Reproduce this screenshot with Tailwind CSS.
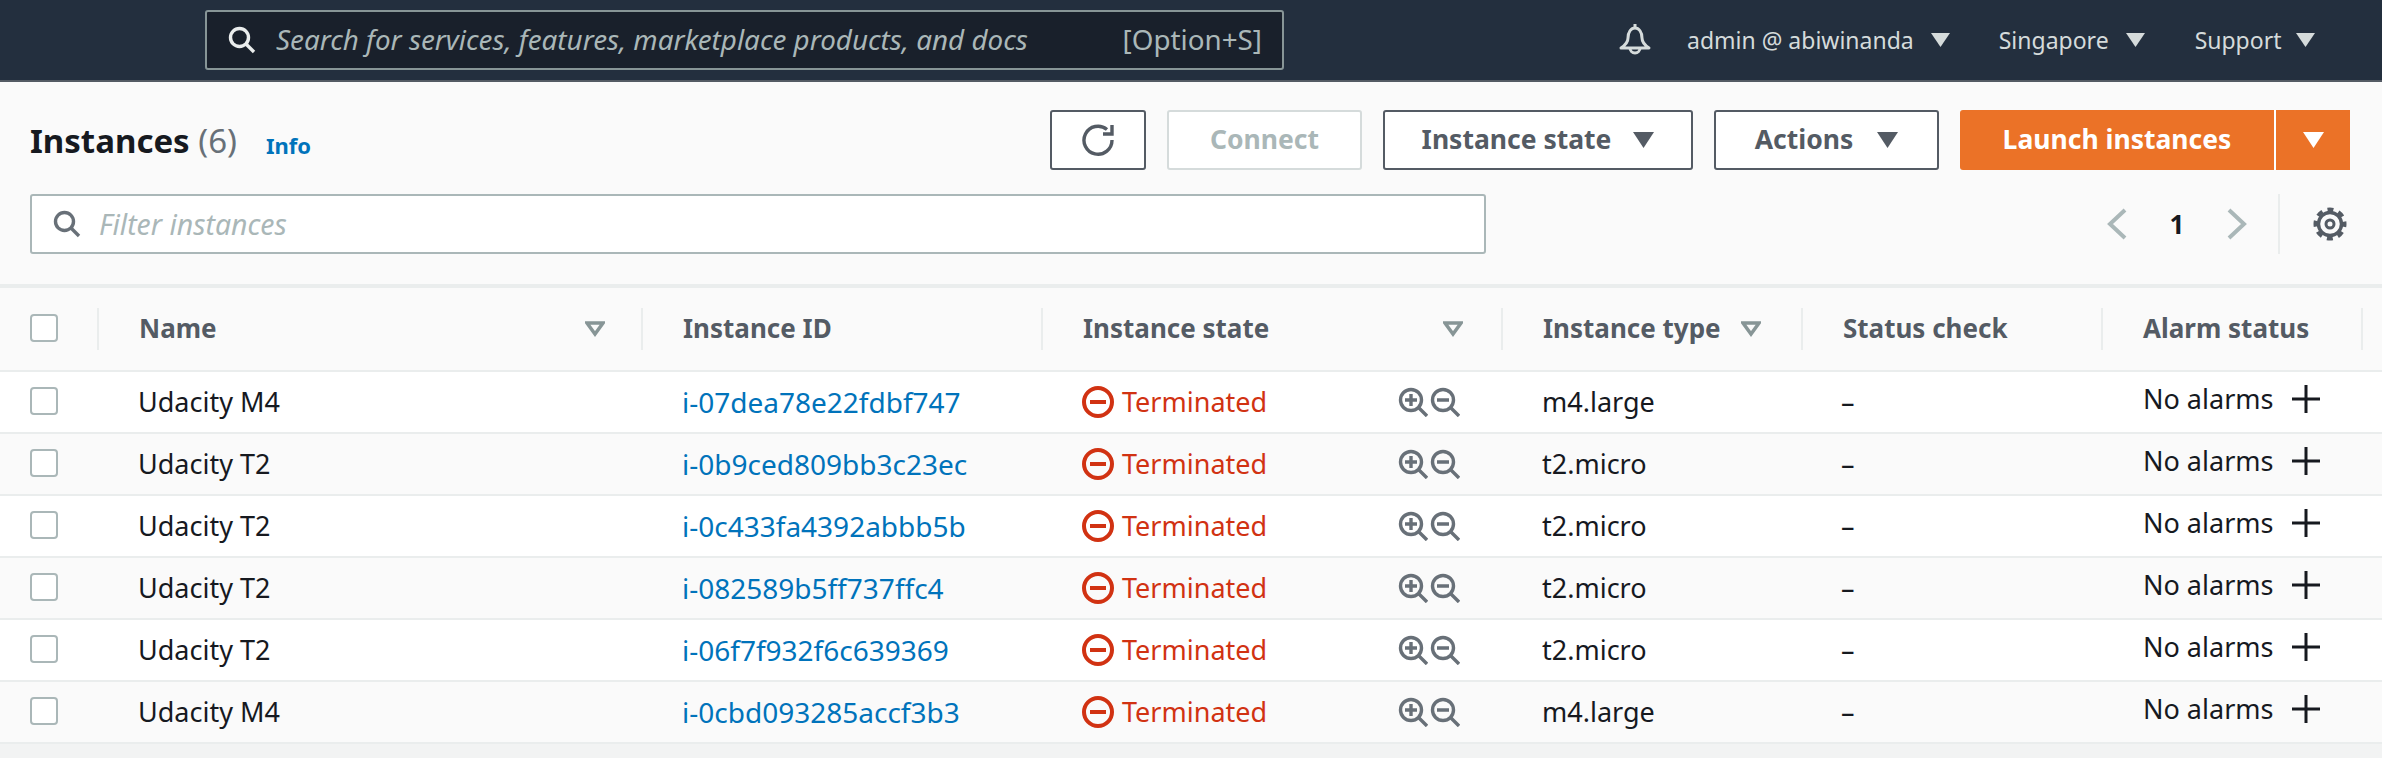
<!DOCTYPE html>
<html lang="en">
<head>
<meta charset="utf-8">
<title>Instances</title>
<script src="https://cdn.jsdelivr.net/npm/@tailwindcss/browser@4"></script>
</head>
<body class="bg-[#f2f3f3] font-['Noto_Sans',sans-serif] text-[#16191f] w-[2382px] h-[758px] overflow-hidden">

<header class="h-[82px] bg-[#232f3e] border-b-2 border-[#545b64] flex items-center pl-[205px]">
  <div class="w-[1079px] h-[60px] bg-[#19202b] border-2 border-[#879596] rounded-[3px] flex items-center pl-[20px] pr-[20px] text-[27.8px] text-[#aab7b8]">
    <svg class="w-[30px] h-[30px] text-[#eaeded]" viewBox="0 0 30 30" fill="none" stroke="currentColor" stroke-width="3.4"><circle cx="12.5" cy="12.5" r="9"/><path d="M19 19l8 8"/></svg>
    <span class="ml-[19px] italic">Search for services, features, marketplace products, and docs</span>
    <span class="ml-auto">[Option+S]</span>
  </div>
  <div class="ml-[334px] flex items-center text-[23px] text-[#d5dbdb]">
    <svg class="w-[34px] h-[34px]" viewBox="0 0 34 34" fill="none" stroke="currentColor" stroke-width="3" stroke-linejoin="round"><path d="M17 1v4M10 15c0-6 3-10 7-10s7 4 7 10c0 4 4 8 7 10H3c3-2 7-6 7-10z"/><path d="M12 25a5 5 0 0 0 10 0"/></svg>
    <span class="ml-[35px]">admin @ abiwinanda</span>
    <svg class="ml-[17px] w-[19px] h-[14px]" viewBox="0 0 19 14"><path d="M0 0h19l-9.5 14z" fill="currentColor"/></svg>
    <span class="ml-[49px]">Singapore</span>
    <svg class="ml-[17px] w-[19px] h-[14px]" viewBox="0 0 19 14"><path d="M0 0h19l-9.5 14z" fill="currentColor"/></svg>
    <span class="ml-[50px]">Support</span>
    <svg class="ml-[15px] w-[19px] h-[14px]" viewBox="0 0 19 14"><path d="M0 0h19l-9.5 14z" fill="currentColor"/></svg>
  </div>
</header>

<section class="bg-[#fafafa] h-[204px] border-b-2 border-[#eaeded] pl-[30px] pr-[32px]">
  <div class="h-[112px] flex items-start pt-[28px]">
    <div class="flex items-baseline mt-[9px]">
      <h1 class="text-[33px] leading-[44px] font-bold">Instances <span class="font-normal text-[#687078]">(6)</span></h1>
      <a class="ml-[29px] text-[22px] font-bold text-[#0073bb] relative top-[1px]">Info</a>
    </div>
    <div class="ml-auto flex items-center gap-[21px] text-[26.5px] font-bold">
      <button class="w-[96px] h-[60px] bg-white border-2 border-[#545b64] rounded-[3px] flex items-center justify-center">
        <svg class="w-[36px] h-[34px] text-[#545b64]" viewBox="0 0 36 34" fill="none" stroke="currentColor" stroke-width="3.4"><path d="M27 6.5A14 14 0 1 0 32 17"/><path d="M32 2v9h-9" /></svg>
      </button>
      <button class="w-[195px] h-[60px] bg-white border-2 border-[#d5dbdb] rounded-[3px] text-[#aab7b8]">Connect</button>
      <button class="w-[310px] h-[60px] bg-white border-2 border-[#545b64] rounded-[3px] text-[#545b64] flex items-center justify-center gap-[22px]">Instance state
        <svg class="w-[21px] h-[16px]" viewBox="0 0 21 16"><path d="M0 0h21l-10.5 16z" fill="currentColor"/></svg>
      </button>
      <button class="w-[225px] h-[60px] bg-white border-2 border-[#545b64] rounded-[3px] text-[#545b64] flex items-center justify-center gap-[24px]">Actions
        <svg class="w-[21px] h-[16px]" viewBox="0 0 21 16"><path d="M0 0h21l-10.5 16z" fill="currentColor"/></svg>
      </button>
      <div class="w-[390px] h-[60px] bg-[#eb7227] rounded-l-[3px] flex text-white">
        <button class="w-[316px] h-full border-r-2 border-white">Launch instances</button>
        <button class="flex-1 flex items-center justify-center"><svg class="w-[21px] h-[16px]" viewBox="0 0 21 16"><path d="M0 0h21l-10.5 16z" fill="currentColor"/></svg></button>
      </div>
    </div>
  </div>
  <div class="flex items-start">
    <div class="w-[1456px] h-[60px] bg-white border-2 border-[#aab7b8] rounded-[3px] flex items-center pl-[20px] text-[28.4px] italic text-[#aab7b8]">
      <svg class="w-[30px] h-[30px] text-[#687078]" viewBox="0 0 30 30" fill="none" stroke="currentColor" stroke-width="3.4"><circle cx="12.5" cy="12.5" r="9"/><path d="M19 19l8 8"/></svg>
      <span class="ml-[17px]">Filter instances</span>
    </div>
    <div class="ml-auto h-[60px] flex items-center">
      <svg class="w-[20px] h-[32px] text-[#aab7b8]" viewBox="0 0 20 32" fill="none" stroke="currentColor" stroke-width="4"><path d="M18 2L3 16l15 14"/></svg>
      <span class="w-[100px] text-center text-[26px] font-bold">1</span>
      <svg class="w-[20px] h-[32px] text-[#aab7b8]" viewBox="0 0 20 32" fill="none" stroke="currentColor" stroke-width="4"><path d="M2 2l15 14L2 30"/></svg>
      <div class="w-[2px] h-[60px] ml-[31px] bg-[#eaeded]"></div>
      <svg class="ml-[33px] mr-[3px] w-[34px] h-[34px] text-[#545b64]" viewBox="0 0 34 34" fill="none" stroke="currentColor"><circle cx="17" cy="17" r="11.5" stroke-width="3.4"/><circle cx="17" cy="17" r="14.5" stroke-width="4" stroke-dasharray="6 5.39" stroke-dashoffset="3"/><circle cx="17" cy="17" r="4" stroke-width="3"/></svg>
    </div>
  </div>
</section>

<section class="text-[27px]">
  <div class="h-[84px] border-t-2 border-[#eaeded] bg-[#fafafa] grid grid-cols-[99px_544px_400px_460px_300px_300px_260px] items-center text-[26px] font-bold text-[#545b64]">
    <div class="pl-[30px] h-[42px] flex items-center border-r-2 border-[#eaeded]"><span class="block w-[28px] h-[28px] bg-white border-2 border-[#aab7b8] rounded-[4px] -mt-[3px]"></span></div>
    <div class="pl-[40px] pr-[36px] h-[42px] flex items-center justify-between border-r-2 border-[#eaeded]"><span class="-mt-[2px]">Name</span><svg class="w-[20px] h-[16px] text-[#879596]" viewBox="0 0 20 16" fill="none" stroke="currentColor" stroke-width="3.4"><path d="M2 2h16l-8 11z"/></svg></div>
    <div class="pl-[40px] h-[42px] flex items-center border-r-2 border-[#eaeded]"><span class="-mt-[2px]">Instance ID</span></div>
    <div class="pl-[40px] pr-[38px] h-[42px] flex items-center justify-between border-r-2 border-[#eaeded]"><span class="-mt-[2px]">Instance state</span><svg class="w-[20px] h-[16px] text-[#879596]" viewBox="0 0 20 16" fill="none" stroke="currentColor" stroke-width="3.4"><path d="M2 2h16l-8 11z"/></svg></div>
    <div class="pl-[40px] h-[42px] flex items-center gap-[20px] border-r-2 border-[#eaeded]"><span class="-mt-[2px]">Instance type</span><svg class="w-[20px] h-[16px] text-[#879596]" viewBox="0 0 20 16" fill="none" stroke="currentColor" stroke-width="3.4"><path d="M2 2h16l-8 11z"/></svg></div>
    <div class="pl-[40px] h-[42px] flex items-center border-r-2 border-[#eaeded]"><span class="-mt-[2px]">Status check</span></div>
    <div class="pl-[40px] h-[42px] flex items-center border-r-2 border-[#eaeded]"><span class="-mt-[2px]">Alarm status</span></div>
  </div>

  <div class="h-[62px] border-t-2 border-[#eaeded] bg-white grid grid-cols-[99px_544px_400px_460px_300px_300px_260px] items-center">
    <div class="pl-[30px]"><span class="block w-[28px] h-[28px] bg-white border-2 border-[#aab7b8] rounded-[4px] -mt-[3px]"></span></div>
    <div class="pl-[39px]">Udacity M4</div>
    <div class="pl-[39px] text-[28px] text-[#0073bb]">i-07dea78e22fdbf747</div>
    <div class="pl-[39px] flex items-center text-[#d13212]"><svg class="w-[32px] h-[32px]" viewBox="0 0 32 32" fill="none" stroke="currentColor" stroke-width="4"><circle cx="16" cy="16" r="14"/><path d="M8 16h16"/></svg><span class="ml-[8px]">Terminated</span><svg class="ml-auto w-[30px] h-[30px] text-[#687078]" viewBox="0 0 30 30" fill="none" stroke="currentColor" stroke-width="3.4"><circle cx="13" cy="13" r="10.5"/><path d="M21 21l8 8M7 13h12M13 7v12"/></svg><svg class="ml-[2px] mr-[43px] w-[30px] h-[30px] text-[#687078]" viewBox="0 0 30 30" fill="none" stroke="currentColor" stroke-width="3.4"><circle cx="13" cy="13" r="10.5"/><path d="M21 21l8 8M7 13h12"/></svg></div>
    <div class="pl-[39px]">m4.large</div>
    <div class="pl-[38px]">–</div>
    <div class="pl-[40px] flex items-center -mt-[6px]">No alarms<svg class="ml-[19px] w-[28px] h-[28px]" viewBox="0 0 28 28" stroke="currentColor" stroke-width="3"><path d="M14 0v28M0 14h28"/></svg></div>
  </div>

  <div class="h-[62px] border-t-2 border-[#eaeded] bg-[#fafafa] grid grid-cols-[99px_544px_400px_460px_300px_300px_260px] items-center">
    <div class="pl-[30px]"><span class="block w-[28px] h-[28px] bg-white border-2 border-[#aab7b8] rounded-[4px] -mt-[3px]"></span></div>
    <div class="pl-[39px]">Udacity T2</div>
    <div class="pl-[39px] text-[28px] text-[#0073bb]">i-0b9ced809bb3c23ec</div>
    <div class="pl-[39px] flex items-center text-[#d13212]"><svg class="w-[32px] h-[32px]" viewBox="0 0 32 32" fill="none" stroke="currentColor" stroke-width="4"><circle cx="16" cy="16" r="14"/><path d="M8 16h16"/></svg><span class="ml-[8px]">Terminated</span><svg class="ml-auto w-[30px] h-[30px] text-[#687078]" viewBox="0 0 30 30" fill="none" stroke="currentColor" stroke-width="3.4"><circle cx="13" cy="13" r="10.5"/><path d="M21 21l8 8M7 13h12M13 7v12"/></svg><svg class="ml-[2px] mr-[43px] w-[30px] h-[30px] text-[#687078]" viewBox="0 0 30 30" fill="none" stroke="currentColor" stroke-width="3.4"><circle cx="13" cy="13" r="10.5"/><path d="M21 21l8 8M7 13h12"/></svg></div>
    <div class="pl-[39px]">t2.micro</div>
    <div class="pl-[38px]">–</div>
    <div class="pl-[40px] flex items-center -mt-[6px]">No alarms<svg class="ml-[19px] w-[28px] h-[28px]" viewBox="0 0 28 28" stroke="currentColor" stroke-width="3"><path d="M14 0v28M0 14h28"/></svg></div>
  </div>

  <div class="h-[62px] border-t-2 border-[#eaeded] bg-white grid grid-cols-[99px_544px_400px_460px_300px_300px_260px] items-center">
    <div class="pl-[30px]"><span class="block w-[28px] h-[28px] bg-white border-2 border-[#aab7b8] rounded-[4px] -mt-[3px]"></span></div>
    <div class="pl-[39px]">Udacity T2</div>
    <div class="pl-[39px] text-[28px] text-[#0073bb]">i-0c433fa4392abbb5b</div>
    <div class="pl-[39px] flex items-center text-[#d13212]"><svg class="w-[32px] h-[32px]" viewBox="0 0 32 32" fill="none" stroke="currentColor" stroke-width="4"><circle cx="16" cy="16" r="14"/><path d="M8 16h16"/></svg><span class="ml-[8px]">Terminated</span><svg class="ml-auto w-[30px] h-[30px] text-[#687078]" viewBox="0 0 30 30" fill="none" stroke="currentColor" stroke-width="3.4"><circle cx="13" cy="13" r="10.5"/><path d="M21 21l8 8M7 13h12M13 7v12"/></svg><svg class="ml-[2px] mr-[43px] w-[30px] h-[30px] text-[#687078]" viewBox="0 0 30 30" fill="none" stroke="currentColor" stroke-width="3.4"><circle cx="13" cy="13" r="10.5"/><path d="M21 21l8 8M7 13h12"/></svg></div>
    <div class="pl-[39px]">t2.micro</div>
    <div class="pl-[38px]">–</div>
    <div class="pl-[40px] flex items-center -mt-[6px]">No alarms<svg class="ml-[19px] w-[28px] h-[28px]" viewBox="0 0 28 28" stroke="currentColor" stroke-width="3"><path d="M14 0v28M0 14h28"/></svg></div>
  </div>

  <div class="h-[62px] border-t-2 border-[#eaeded] bg-[#fafafa] grid grid-cols-[99px_544px_400px_460px_300px_300px_260px] items-center">
    <div class="pl-[30px]"><span class="block w-[28px] h-[28px] bg-white border-2 border-[#aab7b8] rounded-[4px] -mt-[3px]"></span></div>
    <div class="pl-[39px]">Udacity T2</div>
    <div class="pl-[39px] text-[28px] text-[#0073bb]">i-082589b5ff737ffc4</div>
    <div class="pl-[39px] flex items-center text-[#d13212]"><svg class="w-[32px] h-[32px]" viewBox="0 0 32 32" fill="none" stroke="currentColor" stroke-width="4"><circle cx="16" cy="16" r="14"/><path d="M8 16h16"/></svg><span class="ml-[8px]">Terminated</span><svg class="ml-auto w-[30px] h-[30px] text-[#687078]" viewBox="0 0 30 30" fill="none" stroke="currentColor" stroke-width="3.4"><circle cx="13" cy="13" r="10.5"/><path d="M21 21l8 8M7 13h12M13 7v12"/></svg><svg class="ml-[2px] mr-[43px] w-[30px] h-[30px] text-[#687078]" viewBox="0 0 30 30" fill="none" stroke="currentColor" stroke-width="3.4"><circle cx="13" cy="13" r="10.5"/><path d="M21 21l8 8M7 13h12"/></svg></div>
    <div class="pl-[39px]">t2.micro</div>
    <div class="pl-[38px]">–</div>
    <div class="pl-[40px] flex items-center -mt-[6px]">No alarms<svg class="ml-[19px] w-[28px] h-[28px]" viewBox="0 0 28 28" stroke="currentColor" stroke-width="3"><path d="M14 0v28M0 14h28"/></svg></div>
  </div>

  <div class="h-[62px] border-t-2 border-[#eaeded] bg-white grid grid-cols-[99px_544px_400px_460px_300px_300px_260px] items-center">
    <div class="pl-[30px]"><span class="block w-[28px] h-[28px] bg-white border-2 border-[#aab7b8] rounded-[4px] -mt-[3px]"></span></div>
    <div class="pl-[39px]">Udacity T2</div>
    <div class="pl-[39px] text-[28px] text-[#0073bb]">i-06f7f932f6c639369</div>
    <div class="pl-[39px] flex items-center text-[#d13212]"><svg class="w-[32px] h-[32px]" viewBox="0 0 32 32" fill="none" stroke="currentColor" stroke-width="4"><circle cx="16" cy="16" r="14"/><path d="M8 16h16"/></svg><span class="ml-[8px]">Terminated</span><svg class="ml-auto w-[30px] h-[30px] text-[#687078]" viewBox="0 0 30 30" fill="none" stroke="currentColor" stroke-width="3.4"><circle cx="13" cy="13" r="10.5"/><path d="M21 21l8 8M7 13h12M13 7v12"/></svg><svg class="ml-[2px] mr-[43px] w-[30px] h-[30px] text-[#687078]" viewBox="0 0 30 30" fill="none" stroke="currentColor" stroke-width="3.4"><circle cx="13" cy="13" r="10.5"/><path d="M21 21l8 8M7 13h12"/></svg></div>
    <div class="pl-[39px]">t2.micro</div>
    <div class="pl-[38px]">–</div>
    <div class="pl-[40px] flex items-center -mt-[6px]">No alarms<svg class="ml-[19px] w-[28px] h-[28px]" viewBox="0 0 28 28" stroke="currentColor" stroke-width="3"><path d="M14 0v28M0 14h28"/></svg></div>
  </div>

  <div class="h-[64px] border-y-2 border-[#eaeded] bg-[#fafafa] grid grid-cols-[99px_544px_400px_460px_300px_300px_260px] items-center">
    <div class="pl-[30px]"><span class="block w-[28px] h-[28px] bg-white border-2 border-[#aab7b8] rounded-[4px] -mt-[3px]"></span></div>
    <div class="pl-[39px]">Udacity M4</div>
    <div class="pl-[39px] text-[28px] text-[#0073bb]">i-0cbd093285accf3b3</div>
    <div class="pl-[39px] flex items-center text-[#d13212]"><svg class="w-[32px] h-[32px]" viewBox="0 0 32 32" fill="none" stroke="currentColor" stroke-width="4"><circle cx="16" cy="16" r="14"/><path d="M8 16h16"/></svg><span class="ml-[8px]">Terminated</span><svg class="ml-auto w-[30px] h-[30px] text-[#687078]" viewBox="0 0 30 30" fill="none" stroke="currentColor" stroke-width="3.4"><circle cx="13" cy="13" r="10.5"/><path d="M21 21l8 8M7 13h12M13 7v12"/></svg><svg class="ml-[2px] mr-[43px] w-[30px] h-[30px] text-[#687078]" viewBox="0 0 30 30" fill="none" stroke="currentColor" stroke-width="3.4"><circle cx="13" cy="13" r="10.5"/><path d="M21 21l8 8M7 13h12"/></svg></div>
    <div class="pl-[39px]">m4.large</div>
    <div class="pl-[38px]">–</div>
    <div class="pl-[40px] flex items-center -mt-[6px]">No alarms<svg class="ml-[19px] w-[28px] h-[28px]" viewBox="0 0 28 28" stroke="currentColor" stroke-width="3"><path d="M14 0v28M0 14h28"/></svg></div>
  </div>
</section>
</body>
</html>
